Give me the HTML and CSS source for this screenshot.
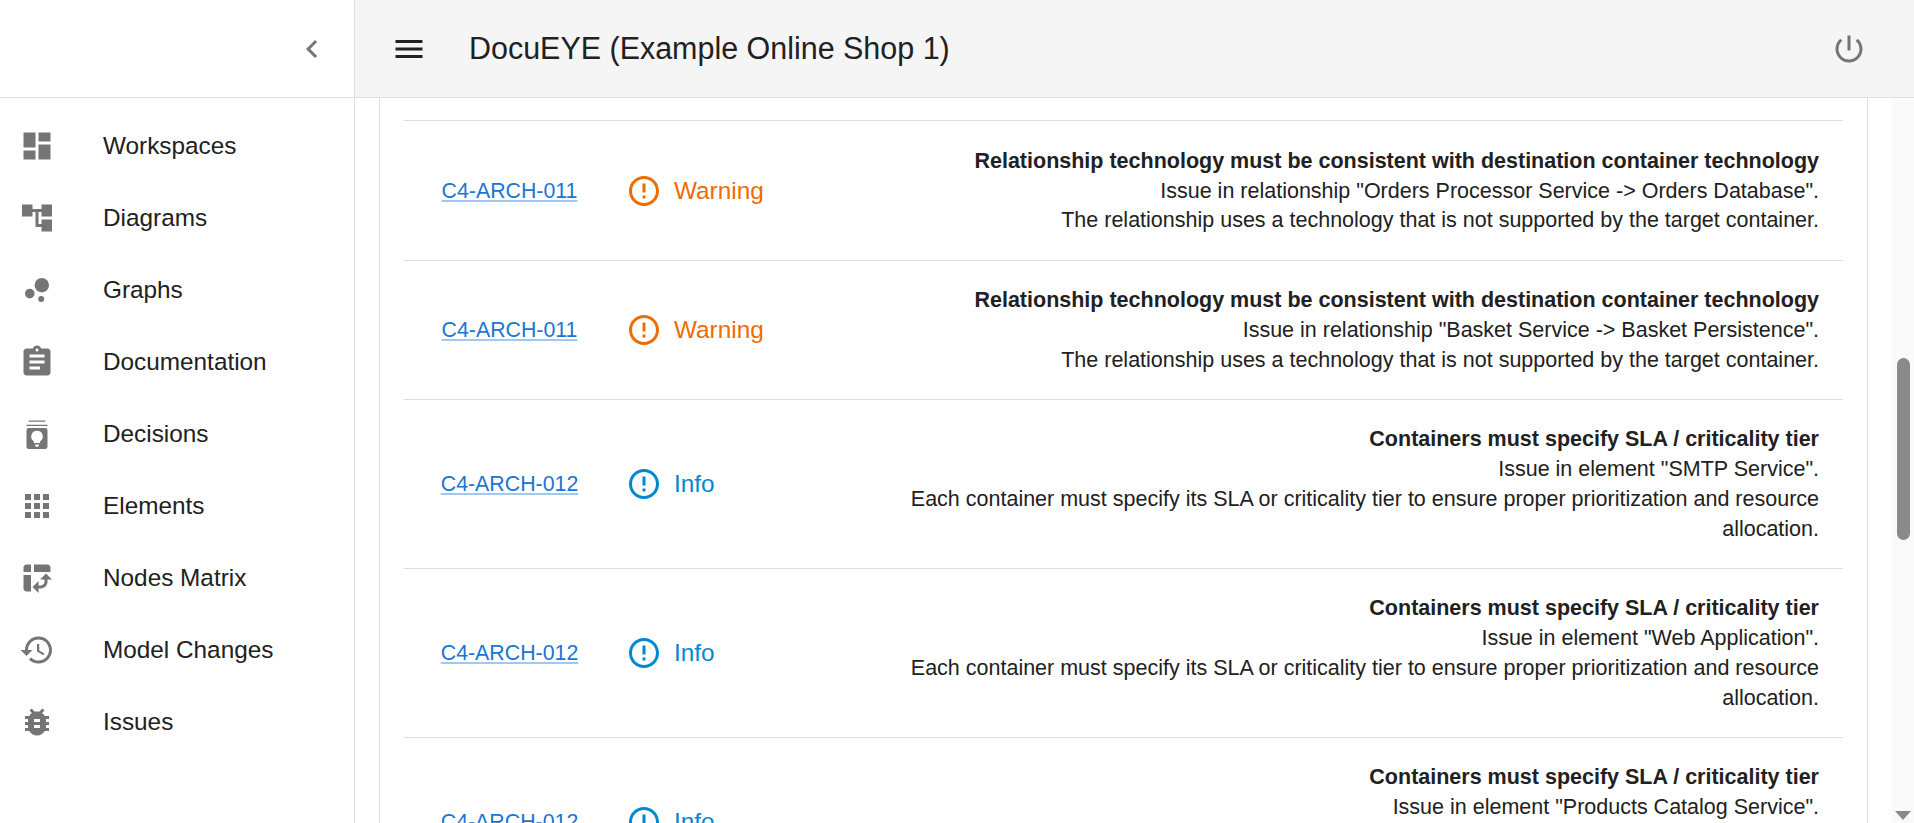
FILE: index.html
```html
<!DOCTYPE html>
<html>
<head>
  <title>DocuEYE</title>
  <link rel="stylesheet" href="styles.css">
</head>
<body>
<div class="app">
  <aside class="drawer">
    <div class="drawer-head">
      <svg class="icon" viewBox="0 0 24 24"><path d="M15.41 7.41L14 6l-6 6 6 6 1.41-1.41L10.83 12z"/></svg>
    </div>
    <nav class="nav">
      <a class="nav-item"><svg class="icon" viewBox="0 0 24 24"><path d="M3 13h8V3H3v10zm0 8h8v-6H3v6zm10 0h8V11h-8v10zm0-18v6h8V3h-8z"/></svg><span>Workspaces</span></a>
      <a class="nav-item"><svg class="icon" viewBox="0 0 24 24"><path d="M22 11V3h-7v3H9V3H2v8h7V8h2v10h4v3h7v-8h-7v3h-2V8h2v3z"/></svg><span>Diagrams</span></a>
      <a class="nav-item"><svg class="icon" viewBox="0 0 24 24"><circle cx="7.2" cy="14.4" r="3.2"/><circle cx="14.8" cy="18" r="2"/><circle cx="15.2" cy="8.8" r="4.8"/></svg><span>Graphs</span></a>
      <a class="nav-item"><svg class="icon" viewBox="0 0 24 24"><path d="M19 3h-4.18C14.4 1.84 13.3 1 12 1c-1.3 0-2.4.84-2.82 2H5c-1.1 0-2 .9-2 2v14c0 1.1.9 2 2 2h14c1.1 0 2-.9 2-2V5c0-1.1-.9-2-2-2zm-7 0c.55 0 1 .45 1 1s-.45 1-1 1-1-.45-1-1 .45-1 1-1zm2 14H7v-2h7v2zm3-4H7v-2h10v2zm0-4H7V7h10v2z"/></svg><span>Documentation</span></a>
      <a class="nav-item"><svg class="icon" viewBox="0 0 24 24"><path d="M6.500 3h11v.8h-11zM5 5.800h14v.8H5z"/><path fill-rule="evenodd" d="M6.500 8h11A1.500 1.500 0 0 1 19 9.500v11a1.500 1.500 0 0 1-1.500 1.500h-11A1.500 1.500 0 0 1 5 20.500v-11A1.500 1.500 0 0 1 6.500 8zM12 9.800a3.800 3.800 0 0 0-2.100 7V18h4.200v-1.200a3.800 3.800 0 0 0-2.100-7zm-1.300 9.200v.4a1.300 1.300 0 0 0 2.600 0V19z"/></svg><span>Decisions</span></a>
      <a class="nav-item"><svg class="icon" viewBox="0 0 24 24"><path d="M4 8h4V4H4v4zm6 12h4v-4h-4v4zm-6 0h4v-4H4v4zm0-6h4v-4H4v4zm6 0h4v-4h-4v4zm6-10v4h4V4h-4zm-6 4h4V4h-4v4zm6 6h4v-4h-4v4zm0 6h4v-4h-4v4z"/></svg><span>Elements</span></a>
      <a class="nav-item"><svg class="icon" viewBox="0 0 24 24"><path d="M10 8h11V5c0-1.100-.9-2-2-2h-9v5zM3 8h5V3H5c-1.100 0-2 .9-2 2v3zm2 13h3V10H3v9c0 1.100.9 2 2 2zm8 1l-4-4 4-4zm1-9l4-4 4 4zm.58 6H13v-2h1.580c1.330 0 2.420-1.080 2.420-2.420V13h2v1.580c0 2.440-1.980 4.420-4.420 4.420z"/></svg><span>Nodes Matrix</span></a>
      <a class="nav-item"><svg class="icon" viewBox="0 0 24 24"><path d="M13 3c-4.970 0-9 4.030-9 9H1l3.890 3.890.07.14L9 12H6c0-3.870 3.130-7 7-7s7 3.130 7 7-3.130 7-7 7c-1.930 0-3.680-.79-4.940-2.060l-1.420 1.420C8.270 19.990 10.510 21 13 21c4.970 0 9-4.030 9-9s-4.030-9-9-9zm-1 5v5l4.280 2.540.72-1.210-3.500-2.080V8H12z"/></svg><span>Model Changes</span></a>
      <a class="nav-item"><svg class="icon" viewBox="0 0 24 24"><path d="M20 8h-2.810c-.45-.78-1.070-1.450-1.820-1.960L17 4.410 15.590 3l-2.170 2.170C12.960 5.060 12.490 5 12 5c-.49 0-.96.06-1.410.17L8.410 3 7 4.410l1.620 1.630C7.880 6.550 7.260 7.220 6.810 8H4v2h2.090c-.05.33-.09.66-.09 1v1H4v2h2v1c0 .34.04.67.09 1H4v2h2.810c1.040 1.790 2.970 3 5.190 3s4.150-1.210 5.190-3H20v-2h-2.090c.05-.33.09-.66.09-1v-1h2v-2h-2v-1c0-.34-.04-.67-.09-1H20V8zm-6 8h-4v-2h4v2zm0-4h-4v-2h4v2z"/></svg><span>Issues</span></a>
    </nav>
  </aside>

  <div class="main">
    <header class="topbar">
      <svg class="icon menu-icon" viewBox="0 0 24 24"><path d="M3 18h18v-2H3v2zm0-5h18v-2H3v2zm0-7v2h18V6H3z"/></svg>
      <h1 class="title">DocuEYE (Example Online Shop 1)</h1>
      <svg class="icon power-icon" viewBox="0 0 24 24"><path d="M13 3h-2v10h2V3zm4.830 2.170l-1.420 1.420C17.990 7.860 19 9.810 19 12c0 3.870-3.130 7-7 7s-7-3.130-7-7c0-2.190 1.010-4.140 2.580-5.420L6.170 5.170C4.230 6.820 3 9.260 3 12c0 4.970 4.030 9 9 9s9-4.030 9-9c0-2.740-1.230-5.180-3.170-6.830z"/></svg>
    </header>

    <div class="content">
      <div class="scroll-body">
        <div class="paper">
          <div class="issue">
            <a class="rule-link">C4-ARCH-011</a>
            <div class="severity warning"><svg class="icon" viewBox="0 0 24 24"><path d="M11 15h2v2h-2zm0-8h2v6h-2zm.99-5C6.470 2 2 6.480 2 12s4.470 10 9.990 10C17.520 22 22 17.520 22 12S17.520 2 11.990 2zM12 20c-4.420 0-8-3.580-8-8s3.580-8 8-8 8 3.580 8 8-3.580 8-8 8z"/></svg>Warning</div>
            <div class="desc"><b>Relationship technology must be consistent with destination container technology</b><br>Issue in relationship "Orders Processor Service -&gt; Orders Database".<br>The relationship uses a technology that is not supported by the target container.</div>
          </div>
          <div class="issue">
            <a class="rule-link">C4-ARCH-011</a>
            <div class="severity warning"><svg class="icon" viewBox="0 0 24 24"><path d="M11 15h2v2h-2zm0-8h2v6h-2zm.99-5C6.470 2 2 6.480 2 12s4.470 10 9.990 10C17.520 22 22 17.520 22 12S17.520 2 11.990 2zM12 20c-4.420 0-8-3.580-8-8s3.580-8 8-8 8 3.580 8 8-3.580 8-8 8z"/></svg>Warning</div>
            <div class="desc"><b>Relationship technology must be consistent with destination container technology</b><br>Issue in relationship "Basket Service -&gt; Basket Persistence".<br>The relationship uses a technology that is not supported by the target container.</div>
          </div>
          <div class="issue">
            <a class="rule-link">C4-ARCH-012</a>
            <div class="severity info"><svg class="icon" viewBox="0 0 24 24"><path d="M11 15h2v2h-2zm0-8h2v6h-2zm.99-5C6.470 2 2 6.480 2 12s4.470 10 9.990 10C17.520 22 22 17.520 22 12S17.520 2 11.990 2zM12 20c-4.420 0-8-3.580-8-8s3.580-8 8-8 8 3.580 8 8-3.580 8-8 8z"/></svg>Info</div>
            <div class="desc"><b>Containers must specify SLA / criticality tier</b><br>Issue in element "SMTP Service".<br>Each container must specify its SLA or criticality tier to ensure proper prioritization and resource allocation.</div>
          </div>
          <div class="issue">
            <a class="rule-link">C4-ARCH-012</a>
            <div class="severity info"><svg class="icon" viewBox="0 0 24 24"><path d="M11 15h2v2h-2zm0-8h2v6h-2zm.99-5C6.470 2 2 6.480 2 12s4.470 10 9.990 10C17.520 22 22 17.520 22 12S17.520 2 11.990 2zM12 20c-4.420 0-8-3.580-8-8s3.580-8 8-8 8 3.580 8 8-3.580 8-8 8z"/></svg>Info</div>
            <div class="desc"><b>Containers must specify SLA / criticality tier</b><br>Issue in element "Web Application".<br>Each container must specify its SLA or criticality tier to ensure proper prioritization and resource allocation.</div>
          </div>
          <div class="issue">
            <a class="rule-link">C4-ARCH-012</a>
            <div class="severity info"><svg class="icon" viewBox="0 0 24 24"><path d="M11 15h2v2h-2zm0-8h2v6h-2zm.99-5C6.470 2 2 6.480 2 12s4.470 10 9.990 10C17.520 22 22 17.520 22 12S17.520 2 11.990 2zM12 20c-4.420 0-8-3.580-8-8s3.580-8 8-8 8 3.580 8 8-3.580 8-8 8z"/></svg>Info</div>
            <div class="desc"><b>Containers must specify SLA / criticality tier</b><br>Issue in element "Products Catalog Service".<br>Each container must specify its SLA or criticality tier to ensure proper prioritization and resource allocation.</div>
          </div>
        </div>
      </div>
      <div class="scrollbar">
        <div class="thumb"></div>
        <div class="arrow-down"></div>
      </div>
    </div>
  </div>
</div>
</body>
</html>
```

FILE: styles.css
```css
html, body { margin: 0; height: 100%; overflow: hidden; }
body { font-family: "Liberation Sans", Arial, sans-serif; color: #212121; background: #fff; }

.app { display: flex; height: 823px; }
.icon { width: 36px; height: 36px; flex: none; fill: #757575; display: block; }

/* left drawer */
.drawer { width: 354px; flex: none; border-right: 1px solid #e0e0e0; }
.drawer-head { height: 97px; border-bottom: 1px solid #e0e0e0; display: flex; align-items: center; justify-content: flex-end; padding-right: 24px; }
.nav { padding-top: 12px; }
.nav-item { height: 72px; display: flex; align-items: center; gap: 48px; padding-left: 19px; font-size: 24.33px; }

/* top bar */
.main { flex: 1; min-width: 0; display: flex; flex-direction: column; }
.topbar { height: 97px; flex: none; background: #f5f5f5; border-bottom: 1px solid #e0e0e0; display: flex; align-items: center; padding: 0 47px 0 36px; }
.menu-icon { fill: #212121; }
.title { margin: 0 0 0 42px; font-size: 30.46px; font-weight: 400; flex: 1; }

/* issues list */
.content { flex: 1; min-height: 0; display: flex; }
.scroll-body { flex: 1; min-width: 0; overflow: hidden; padding: 0 24px; }
.paper { border-left: 1px solid #e0e0e0; border-right: 1px solid #e0e0e0; padding: 22.4px 24px 0; }
.issue { display: grid; grid-template-columns: 211px 264px 1fr; align-items: center; border-top: 1px solid #e0e0e0; padding: 24.5px 0 23.5px; }
.rule-link { text-align: center; font-size: 21.33px; color: #1976d2; text-decoration: underline; text-decoration-color: rgba(25, 118, 210, .4); }
.severity { display: flex; align-items: center; gap: 12px; padding-left: 11px; font-size: 24.33px; }
.severity.warning { color: #ef6c00; }
.severity.warning .icon { fill: #ef6c00; }
.severity.info { color: #0288d1; }
.severity.info .icon { fill: #0288d1; }
.desc { font-size: 21.5px; line-height: 29.75px; text-align: right; padding: 1px 24px 0 0; }

/* scrollbar */
.scrollbar { width: 22px; flex: none; background: #fafafa; position: relative; }
.thumb { width: 13px; height: 182px; margin: 260px 0 0 5px; border-radius: 7px; background: #8a8a8a; }
.arrow-down { position: absolute; right: 3px; bottom: 3px; width: 0; height: 0; border-left: 8px solid transparent; border-right: 8px solid transparent; border-top: 9px solid #8a8a8a; }
```
